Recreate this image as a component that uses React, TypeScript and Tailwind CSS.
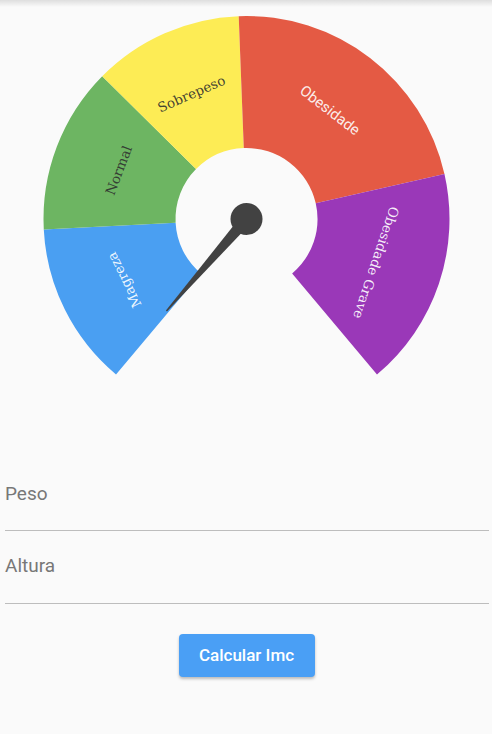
import React from "react";

const CX = 246.5;
const CY = 219;
const R_OUT = 203;
const R_IN = 71;

function pt(a: number, r: number): [number, number] {
  const rad = (a * Math.PI) / 180;
  return [CX + r * Math.sin(rad), CY - r * Math.cos(rad)];
}

function sector(a0: number, a1: number): string {
  const [x0, y0] = pt(a0, R_OUT);
  const [x1, y1] = pt(a1, R_OUT);
  const [x2, y2] = pt(a1, R_IN);
  const [x3, y3] = pt(a0, R_IN);
  const large = a1 - a0 > 180 ? 1 : 0;
  return `M ${x0} ${y0} A ${R_OUT} ${R_OUT} 0 ${large} 1 ${x1} ${y1} L ${x2} ${y2} A ${R_IN} ${R_IN} 0 ${large} 0 ${x3} ${y3} Z`;
}

type Seg = {
  a0: number;
  a1: number;
  color: string;
  label: string;
  textClass: string;
  fill: string;
  opacity: number;
};

const serif = "font-['DejaVu_Serif',serif] text-[13.5px]";

const segs: Seg[] = [
  { a0: -140, a1: -93, color: "#4a9ff2", label: "Magreza", textClass: serif, fill: "#ffffff", opacity: 0.92 },
  { a0: -93, a1: -45.3, color: "#6db562", label: "Normal", textClass: serif, fill: "#2e2e2e", opacity: 0.9 },
  { a0: -45.3, a1: -2.2, color: "#fdec55", label: "Sobrepeso", textClass: serif, fill: "#2e2e2e", opacity: 0.9 },
  { a0: -2.2, a1: 77.2, color: "#e45a44", label: "Obesidade", textClass: "font-['Roboto',sans-serif] text-[15px]", fill: "#ffffff", opacity: 0.9 },
  { a0: 77.2, a1: 140, color: "#9a38b8", label: "Obesidade Grave", textClass: serif, fill: "#ffffff", opacity: 0.92 },
];

function Gauge() {
  const needleAngle = -139;
  const tipLen = 122;
  return (
    <svg width={492} height={472} viewBox="0 0 492 472" className="block">
      {segs.map((s) => (
        <path key={s.label} d={sector(s.a0, s.a1)} fill={s.color} />
      ))}
      {segs.map((s) => {
        const mid = (s.a0 + s.a1) / 2;
        const [x, y] = pt(mid, (R_IN + R_OUT) / 2);
        return (
          <text
            key={"t" + s.label}
            x={x}
            y={y}
            textAnchor="middle"
            dominantBaseline="central"
            fill={s.fill}
            fillOpacity={s.opacity}
            transform={`rotate(${mid} ${x} ${y})`}
            className={s.textClass}
          >
            {s.label}
          </text>
        );
      })}
      <g transform={`rotate(${needleAngle} ${CX} ${CY})`}>
        <polygon
          points={`${CX - 6},${CY} ${CX - 0.7},${CY - tipLen} ${CX + 0.7},${CY - tipLen} ${CX + 6},${CY}`}
          fill="#424242"
        />
      </g>
      <circle cx={CX} cy={CY} r={16} fill="#424242" />
    </svg>
  );
}

export default function App() {
  return (
    <div className="relative flex w-[500px] h-[734px] overflow-hidden bg-[#fafafa] font-['Roboto',sans-serif]">
      <div className="absolute top-0 left-0 right-[8px] h-[7px] bg-gradient-to-b from-[#dedede] to-[#fafafa]" />
      <div className="flex flex-col w-[492px]">
        <Gauge />
        <div className="ml-[5px] w-[484px] pt-[10px] pb-[24px] border-b border-[#bdbdbd]">
          <div className="h-[24px] leading-[24px] text-[19px] text-[#777777]">Peso</div>
        </div>
        <div className="ml-[5px] w-[484px] pt-[23px] pb-[25px] border-b border-[#bdbdbd]">
          <div className="h-[24px] leading-[24px] text-[19px] text-[#777777]">Altura</div>
        </div>
        <div className="flex justify-center mt-[30px] pl-[1px]">
          <button className="w-[136px] h-[43px] rounded-[4px] bg-[#4a9ff5] text-white text-[17px] font-medium shadow-[0_2px_3px_rgba(0,0,0,0.25)]">
            Calcular Imc
          </button>
        </div>
      </div>
      <div className="w-[8px] h-full bg-white" />
    </div>
  );
}
